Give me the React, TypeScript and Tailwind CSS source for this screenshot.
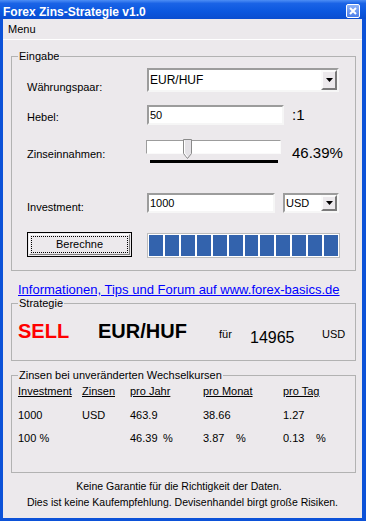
const sunken =
  'border-2 border-t-[#9c9c9c] border-l-[#9c9c9c] border-b-[#f6f6f6] border-r-[#f6f6f6] bg-white'
const raised =
  'border-2 border-t-[#fbfbfb] border-l-[#fbfbfb] border-b-[#7a7a7a] border-r-[#7a7a7a] bg-[#ece9ec]'

function DropButton() {
  return (
    <div className={`flex w-[16px] items-center justify-center ${raised}`}>
      <svg width="7" height="4" viewBox="0 0 7 4">
        <path d="M0 0h7L3.5 4z" fill="#000" />
      </svg>
    </div>
  )
}

function Combo({ value, className, text }: { value: string; className: string; text: string }) {
  return (
    <div className={`flex items-stretch ${sunken} ${className}`}>
      <div className={`flex flex-1 items-center pl-[1px] ${text}`}>{value}</div>
      <DropButton />
    </div>
  )
}

function TextBox({ value, className }: { value: string; className: string }) {
  return <div className={`flex items-center pl-[1px] text-[11px] ${sunken} ${className}`}>{value}</div>
}

export default function App() {
  const blocks = Array.from({ length: 12 })

  return (
    <div className="flex h-[521px] w-[366px] flex-col bg-[#0c52d8] font-['Liberation_Sans',Arial,sans-serif] text-[11px] leading-[13px] text-black">
      {/* title bar */}
      <div className="flex h-[19px] items-start justify-between bg-[linear-gradient(180deg,#4d8ef5_0%,#1a63e6_18%,#0b57df_60%,#0a4dd0_100%)] pl-[3px] pr-[6px]">
        <div className="pt-[5px] text-[12px] font-bold leading-[14px] text-white">Forex Zins-Strategie v1.0</div>
        <div className="mt-[4px] flex h-[14px] w-[14px] items-center justify-center rounded-[2px] border border-white bg-[linear-gradient(180deg,#8fb3f7,#4c7ee9)]">
          <svg width="8" height="8" viewBox="0 0 8 8">
            <path d="M1 1L7 7M7 1L1 7" stroke="#fff" strokeWidth="2" />
          </svg>
        </div>
      </div>

      {/* client area */}
      <div className="mb-[3px] ml-[3px] mr-[4px] flex flex-1 flex-col bg-[#ece9ec]">
        <div className="flex h-[21px] items-center border-b border-white pl-[5px]">Menu</div>

        <fieldset className="ml-[8px] mr-[6px] mt-[10px] h-[221px] border border-[#b2b2b2]">
          <legend className="ml-[6px] px-[1px] leading-[13px]">Eingabe</legend>

          <div className="mt-[5px] flex h-[24px] pl-[15px]">
            <div className="mt-[13px] w-[120px]">Währungspaar:</div>
            <Combo value="EUR/HUF" className="h-[24px] w-[192px]" text="text-[12px]" />
          </div>

          <div className="mt-[13px] flex h-[20px] pl-[15px]">
            <div className="mt-[6px] w-[120px]">Hebel:</div>
            <TextBox value="50" className="h-[20px] w-[137px]" />
            <div className="ml-[8px] mt-[1px] text-[15px] leading-[17px]">:1</div>
          </div>

          <div className="mt-[15px] flex h-[23px] pl-[15px]">
            <div className="mt-[8px] w-[119px]">Zinseinnahmen:</div>
            <div className="flex w-[135px] flex-col">
              <div className="relative h-[14px] border border-t-[#9c9c9c] border-l-[#9c9c9c] border-b-[#fafafa] border-r-[#fafafa] bg-white">
                <svg className="absolute left-[36px] top-[-2px]" width="9" height="20" viewBox="0 0 9 20">
                  <path d="M0.5 0.5H8.5V14.5L4.5 19.5L0.5 14.5Z" fill="#e4e2e6" stroke="#8a8a8a" />
                  <path d="M1.5 1.5V14L4.5 18" fill="none" stroke="#fff" />
                </svg>
              </div>
              <div className="ml-[4px] mt-[6px] h-[3px] w-[128px] bg-black" />
            </div>
            <div className="ml-[11px] mt-[4px] text-[15px] leading-[17px]">46.39%</div>
          </div>

          <div className="mt-[30px] flex h-[20px] pl-[15px]">
            <div className="mt-[8px] w-[120px]">Investment:</div>
            <TextBox value="1000" className="h-[20px] w-[128px]" />
            <Combo value="USD" className="ml-[8px] h-[20px] w-[56px]" text="text-[11px]" />
          </div>

          <div className="mt-[19px] flex h-[25px] pl-[15px]">
            <div className="flex h-[25px] w-[105px] border border-black bg-[#ece9ec] p-[1px]">
              <div className="flex flex-1 border border-t-white border-l-white border-b-[#808080] border-r-[#808080] p-[1px]">
                <div className="flex flex-1 items-center justify-center border border-dotted border-black">
                  Berechne
                </div>
              </div>
            </div>
            <div className="ml-[15px] mt-[1px] flex h-[25px] w-[193px] gap-[2px] border border-[#bdbdbd] bg-white p-[1px]">
              {blocks.map((_, i) => (
                <div key={i} className="flex-1 bg-[#3363ad]" />
              ))}
            </div>
          </div>
        </fieldset>

        <div className="mt-[11px] pl-[15px] text-[13px] leading-[15px] text-[#0000ff] underline">
          Informationen, Tips und Forum auf www.forex-basics.de
        </div>

        <fieldset className="ml-[8px] mr-[6px] h-[64px] border border-[#b2b2b2]">
          <legend className="ml-[6px] px-[1px] leading-[13px]">Strategie</legend>
          <div className="mt-[10px] flex items-start pl-[6px]">
            <div className="w-[80px] text-[20px] font-bold leading-[23px] text-[#ff0000]">SELL</div>
            <div className="w-[121px] text-[20px] font-bold leading-[23px]">EUR/HUF</div>
            <div className="mt-[8px] w-[31px]">für</div>
            <div className="mt-[9px] w-[72px] text-[16px] leading-[18px]">14965</div>
            <div className="mt-[8px]">USD</div>
          </div>
        </fieldset>

        <fieldset className="ml-[8px] mr-[6px] mt-[8px] h-[104px] border border-[#b2b2b2]">
          <legend className="ml-[6px] px-[1px] leading-[13px]">Zinsen bei unveränderten Wechselkursen</legend>
          <div className="mt-[3px] grid grid-cols-[64px_48px_73px_80px_1fr] grid-rows-[24px_23px_13px] pl-[6px]">
            <div className="underline">Investment</div>
            <div className="underline">Zinsen</div>
            <div className="underline">pro Jahr</div>
            <div className="underline">pro Monat</div>
            <div className="underline">pro Tag</div>

            <div>1000</div>
            <div>USD</div>
            <div>463.9</div>
            <div>38.66</div>
            <div>1.27</div>

            <div>100 %</div>
            <div />
            <div className="flex">
              <span className="w-[33px]">46.39</span>%
            </div>
            <div className="flex">
              <span className="w-[33px]">3.87</span>%
            </div>
            <div className="flex">
              <span className="w-[33px]">0.13</span>%
            </div>
          </div>
        </fieldset>

        <div className="mt-[5px] text-center text-[10.5px] leading-[16px]">
          <div className="pr-[7px]">Keine Garantie für die Richtigkeit der Daten.</div>
          <div>Dies ist keine Kaufempfehlung. Devisenhandel birgt große Risiken.</div>
        </div>
      </div>
    </div>
  )
}
